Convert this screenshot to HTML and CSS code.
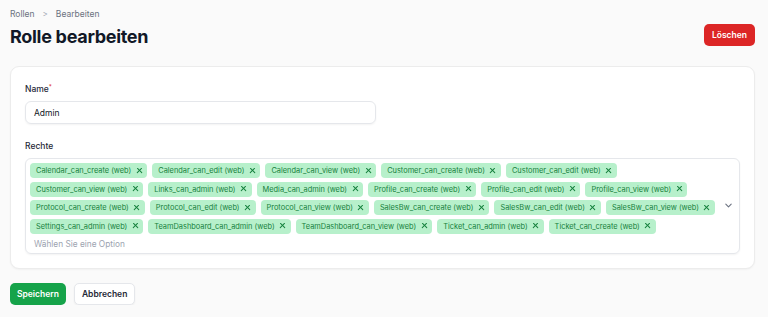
FILE: index.html
```html
<!DOCTYPE html>
<html lang="de">
<head>
<meta charset="utf-8">
<link rel="stylesheet" href="styles.css">
</head>
<body>
<div class="page">
  <div class="header">
    <div class="titles">
      <nav class="crumbs"><span>Rollen</span><span class="sep">&gt;</span><span>Bearbeiten</span></nav>
      <h1>Rolle bearbeiten</h1>
    </div>
    <button class="btn danger">Löschen</button>
  </div>
  <div class="card">
    <div class="field">
      <label>Name<sup>*</sup></label>
      <div class="input">Admin</div>
    </div>
    <div class="field">
      <label>Rechte</label>
      <div class="select">
        <div class="tags">
          <span class="tag">Calendar_can_create (web) <i class="x"></i></span>
          <span class="tag">Calendar_can_edit (web) <i class="x"></i></span>
          <span class="tag">Calendar_can_view (web) <i class="x"></i></span>
          <span class="tag">Customer_can_create (web) <i class="x"></i></span>
          <span class="tag">Customer_can_edit (web) <i class="x"></i></span>
          <span class="tag">Customer_can_view (web) <i class="x"></i></span>
          <span class="tag">Links_can_admin (web) <i class="x"></i></span>
          <span class="tag">Media_can_admin (web) <i class="x"></i></span>
          <span class="tag">Profile_can_create (web) <i class="x"></i></span>
          <span class="tag">Profile_can_edit (web) <i class="x"></i></span>
          <span class="tag">Profile_can_view (web) <i class="x"></i></span>
          <span class="tag">Protocol_can_create (web) <i class="x"></i></span>
          <span class="tag">Protocol_can_edit (web) <i class="x"></i></span>
          <span class="tag">Protocol_can_view (web) <i class="x"></i></span>
          <span class="tag">SalesBw_can_create (web) <i class="x"></i></span>
          <span class="tag">SalesBw_can_edit (web) <i class="x"></i></span>
          <span class="tag">SalesBw_can_view (web) <i class="x"></i></span>
          <span class="tag">Settings_can_admin (web) <i class="x"></i></span>
          <span class="tag">TeamDashboard_can_admin (web) <i class="x"></i></span>
          <span class="tag">TeamDashboard_can_view (web) <i class="x"></i></span>
          <span class="tag">Ticket_can_admin (web) <i class="x"></i></span>
          <span class="tag">Ticket_can_create (web) <i class="x"></i></span>
        </div>
        <div class="placeholder">Wählen Sie eine Option</div>
        <svg class="chev" viewBox="0 0 10 10" width="9" height="9"><path d="M2 3.5 L5 6.5 L8 3.5" fill="none" stroke="#6b7280" stroke-width="1.2" stroke-linecap="round" stroke-linejoin="round"/></svg>
      </div>
    </div>
  </div>
  <div class="actions">
    <button class="btn primary">Speichern</button>
    <button class="btn ghost">Abbrechen</button>
  </div>
</div>
</body>
</html>
```

FILE: styles.css
```css
* { box-sizing: border-box; }
html, body { margin: 0; padding: 0; }
body {
  background: #fafafa;
  font-family: Inter, "Noto Sans", sans-serif;
  color: #111827;
}
.page { padding: 7px 13px 0 10px; }
.header { display: flex; justify-content: space-between; align-items: flex-end; }
.crumbs { font-size: 8.5px; color: #6b7280; display: flex; gap: 8px; align-items: center; height: 14px; }
.crumbs .sep { color: #9ca3af; font-size: 8px; }
h1 { margin: 4px 0 0; font-size: 18px; font-weight: 700; letter-spacing: -0.3px; line-height: 24px; color: #111827; }
.btn {
  font-family: inherit; font-size: 8.5px; font-weight: 600; border: none;
  border-radius: 5px; height: 22px; padding: 0 8px; cursor: pointer;
}
.danger { background: #dc2626; color: #fff; margin-bottom: 3px; }
.card {
  margin-top: 17px; background: #fff; border: 1px solid #ececec; border-radius: 9px;
  padding: 16px 14px 14px 14px; box-shadow: 0 1px 2px rgba(0,0,0,0.04);
}
.field + .field { margin-top: 16px; }
label { display: block; font-size: 8.5px; font-weight: 500; color: #1f2937; margin-bottom: 6px; line-height: 12px; }
label sup { color: #dc2626; font-size: 6px; vertical-align: top; line-height: 8px; }
.input {
  width: 351px; height: 23px; border: 1px solid #e5e7eb; border-radius: 6px;
  font-size: 8.5px; padding: 0 8px; display: flex; align-items: center; color: #111827;
  box-shadow: 0 1px 2px rgba(0,0,0,0.05);
}
.select {
  position: relative; border: 1px solid #e5e7eb; border-radius: 6px; height: 96px;
  padding: 4px 22px 4px 4px; box-shadow: 0 1px 2px rgba(0,0,0,0.05);
}
.tags { display: flex; flex-wrap: wrap; gap: 3.5px 5px; }
.tag {
  background: #b7f0cb; color: #16803c; font-size: 7.4px; height: 15px; line-height: 15px;
  padding: 0 5px 0 6px; border-radius: 4px; display: inline-flex; align-items: center; gap: 5px; white-space: nowrap;
}
.x {
  display: inline-block; width: 6px; height: 6px; position: relative;
}
.x::before, .x::after {
  content: ""; position: absolute; left: -0.5px; top: 2.3px; width: 7px; height: 1.4px;
  background: #15803d; border-radius: 1px; transform: rotate(45deg);
}
.x::after { transform: rotate(-45deg); }
.placeholder { font-size: 8.3px; color: #9ca3af; padding: 5px 4px 0; }
.chev { position: absolute; right: 6px; top: 50%; margin-top: -5px; }
.actions { display: flex; gap: 8px; margin-top: 14px; }
.primary { background: #16a34a; color: #fff; padding: 0 7px; }
.ghost { background: #fff; color: #1f2937; border: 1px solid #e5e7eb; padding: 0 7px; box-shadow: 0 1px 2px rgba(0,0,0,0.05); }
```
